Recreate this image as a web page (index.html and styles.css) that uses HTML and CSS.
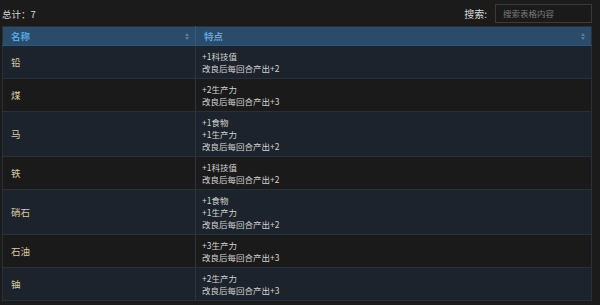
FILE: index.html
```html
<!DOCTYPE html>
<html lang="zh">
<head>
<meta charset="utf-8">
<link rel="stylesheet" href="styles.css">
</head>
<body>
<div class="page">
  <div class="topbar">
    <div class="total">总计：7</div>
    <div class="search">
      <span class="search-label">搜索:</span>
      <input class="search-input" type="text" placeholder="搜索表格内容">
    </div>
  </div>
  <table class="grid">
    <thead>
      <tr>
        <th class="col-name"><div class="th-inner"><span>名称</span><span class="sort"><i class="up"></i><i class="down"></i></span></div></th>
        <th class="col-feat"><div class="th-inner"><span>特点</span><span class="sort"><i class="up"></i><i class="down"></i></span></div></th>
      </tr>
    </thead>
    <tbody>
      <tr class="odd"><td class="name">铅</td><td class="feat">+1科技值<br>改良后每回合产出+2</td></tr>
      <tr class="even"><td class="name">煤</td><td class="feat">+2生产力<br>改良后每回合产出+3</td></tr>
      <tr class="odd"><td class="name">马</td><td class="feat">+1食物<br>+1生产力<br>改良后每回合产出+2</td></tr>
      <tr class="even"><td class="name">铁</td><td class="feat">+1科技值<br>改良后每回合产出+2</td></tr>
      <tr class="odd"><td class="name">硝石</td><td class="feat">+1食物<br>+1生产力<br>改良后每回合产出+2</td></tr>
      <tr class="even"><td class="name">石油</td><td class="feat">+3生产力<br>改良后每回合产出+3</td></tr>
      <tr class="odd"><td class="name">铀</td><td class="feat">+2生产力<br>改良后每回合产出+3</td></tr>
    </tbody>
  </table>
</div>
</body>
</html>
```
FILE: styles.css
```css
html, body {
  margin: 0;
  padding: 0;
  background: #1b1b1c;
  font-family: "Noto Sans CJK SC", "Noto Sans", sans-serif;
  color: #cfcfcf;
}
.page {
  width: 590px;
  padding: 2px 0 0 2px;
}
.topbar {
  display: flex;
  justify-content: space-between;
  align-items: center;
  height: 22px;
  margin-bottom: 2px;
}
.total {
  font-size: 9.5px;
  color: #d6d6d6;
  padding-top: 2px;
}
.search {
  display: flex;
  align-items: center;
  gap: 8px;
}
.search-label {
  font-size: 10px;
  color: #d8d8d8;
}
.search-input {
  box-sizing: border-box;
  width: 97px;
  height: 19px;
  background: #1a1a1a;
  border: 1px solid #3a3a3a;
  color: #ccc;
  font-family: inherit;
  font-size: 8.5px;
  padding: 0 7px;
  outline: none;
}
.search-input::placeholder {
  color: #7a7a7a;
}
.grid {
  width: 590px;
  border-collapse: collapse;
  border: 1px solid #2a3038;
}
.grid th {
  background: #2a4b69;
  color: #5aa7e2;
  font-weight: bold;
  font-size: 9.5px;
  text-align: left;
  height: 18px;
  padding: 0;
  border-bottom: 1px solid #2f5577;
}
.th-inner {
  display: flex;
  justify-content: space-between;
  align-items: center;
  padding: 0 6px 0 8px;
}
.col-name { width: 192px; border-right: 1px solid #355a7a; }
.sort {
  display: flex;
  flex-direction: column;
  gap: 1px;
}
.sort i {
  display: block;
  width: 0;
  height: 0;
  border-left: 2.5px solid transparent;
  border-right: 2.5px solid transparent;
}
.sort .up { border-bottom: 3px solid #5a7d9e; }
.sort .down { border-top: 3px solid #5a7d9e; }
.grid td {
  padding: 4px 6px;
  line-height: 12px;
  border-bottom: 1px solid #2a3038;
  vertical-align: middle;
}
.grid td.name {
  border-right: 1px solid #2c3440;
  color: #dacaa5;
  font-size: 9.5px;
  padding-left: 8px;
}
.grid td.feat {
  color: #d2d2d2;
  font-size: 8.5px;
  padding-left: 6px;
}
tr.odd td { background: #1c232c; }
tr.even td { background: #1a1a1b; }
```
